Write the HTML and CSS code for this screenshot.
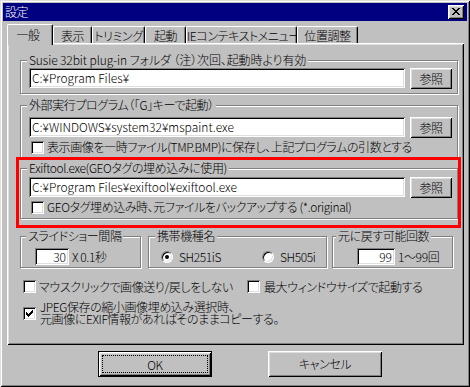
FILE: index.html
```html
<!DOCTYPE html>
<html lang="ja">
<head>
<meta charset="utf-8">
<title>設定</title>
<link rel="stylesheet" href="styles.css">
</head>
<body>
<div class="window">
  <div class="titlebar">
    <span class="title">設定</span>
    <span class="close"><svg width="8" height="7" viewBox="0 0 8 7" shape-rendering="crispEdges"><path d="M0 0h2v1H0zM6 0h2v1H6zM1 1h2v1H1zM5 1h2v1H5zM2 2h4v1H2zM3 3h2v1H3zM2 4h4v1H2zM1 5h2v1H1zM5 5h2v1H5zM0 6h2v1H0zM6 6h2v1H6z" fill="#000"/></svg></span>
  </div>
  <div class="dlg">
    <div class="tabs">
      <div class="tab active t1">一般</div>
      <div class="tab t2">表示</div>
      <div class="tab t3">トリミング</div>
      <div class="tab t4">起動</div>
      <div class="tab t5">IEコンテキストメニュー</div>
      <div class="tab t6">位置調整</div>
    </div>
    <div class="panel">
      <fieldset class="group g1">
        <legend>Susie 32bit plug-in フォルダ （注）次回、起動時より有効</legend>
        <div class="row">
          <div class="input wide">C:¥Program Files¥</div>
          <div class="btn small">参照</div>
        </div>
      </fieldset>
      <fieldset class="group g2">
        <legend>外部実行プログラム（「G」キーで起動）</legend>
        <div class="row">
          <div class="input wide">C:¥WINDOWS¥system32¥mspaint.exe</div>
          <div class="btn small">参照</div>
        </div>
        <div class="check-row inset">
          <span class="checkbox"></span>
          <span class="label">表示画像を一時ファイル(TMP.BMP)に保存し、上記プログラムの引数とする</span>
        </div>
      </fieldset>
      <fieldset class="group g3">
        <legend>Exiftool.exe(GEOタグの埋め込みに使用)</legend>
        <div class="row">
          <div class="input wide">C:¥Program Files¥exiftool¥exiftool.exe</div>
          <div class="btn small">参照</div>
        </div>
        <div class="check-row inset">
          <span class="checkbox"></span>
          <span class="label">GEOタグ埋め込み時、元ファイルをバックアップする (*.original)</span>
        </div>
      </fieldset>
      <div class="bottom-groups">
        <fieldset class="group g4">
          <legend>スライドショー間隔</legend>
          <div class="row mini">
            <div class="input num n30">30</div>
            <span class="unit">X 0.1秒</span>
          </div>
        </fieldset>
        <fieldset class="group g5">
          <legend>携帯機種名</legend>
          <div class="row mini radios">
            <span class="radio-item r1"><span class="radio on"></span><span>SH251iS</span></span>
            <span class="radio-item r2"><span class="radio"></span><span>SH505i</span></span>
          </div>
        </fieldset>
        <fieldset class="group g6">
          <legend>元に戻す可能回数</legend>
          <div class="row mini">
            <div class="input num n99">99</div>
            <span class="unit">1～99回</span>
          </div>
        </fieldset>
      </div>
      <div class="check-row opts">
        <span class="opt first"><span class="checkbox"></span><span class="label">マウスクリックで画像送り/戻しをしない</span></span>
        <span class="opt"><span class="checkbox"></span><span class="label">最大ウィンドウサイズで起動する</span></span>
      </div>
      <div class="check-row two-line">
        <span class="checkbox checked"><svg width="7" height="7" viewBox="0 0 7 7" shape-rendering="crispEdges"><path d="M6 0h1v1H6zM5 1h2v1H5zM0 2h1v1H0zM4 2h3v1H4zM0 3h2v1H0zM3 3h3v1H3zM0 4h5v1H0zM1 5h3v1H1zM2 6h1v1H2z" fill="#000"/></svg></span>
        <span class="label">JPEG保存の縮小画像埋め込み選択時、<br>元画像にEXIF情報があればそのままコピーする。</span>
      </div>
      <div class="annotation"></div>
    </div>
    <div class="buttons">
      <div class="btn big default"><span class="focus">OK</span></div>
      <div class="btn big cancel">キャンセル</div>
    </div>
  </div>
</div>
</body>
</html>
```

FILE: styles.css
```css
* { box-sizing: border-box; }
html, body { margin: 0; padding: 0; background: #c0c0c0; }
body {
  font-family: "Noto Sans CJK JP", "Noto Sans", sans-serif;
  font-size: 12px;
  font-weight: 300;
  line-height: 14px;
  letter-spacing: -0.4px;
  font-feature-settings: "palt" 1;
  color: #000;
}
.window {
  width: 470px;
  height: 387px;
  padding: 3px;
  background: #c0c0c0;
  box-shadow: inset 1px 1px #dfdfdf, inset -1px -1px #000, inset 2px 2px #fff, inset -2px -2px #808080;
}
.titlebar {
  height: 18px;
  background: #000080;
  color: #fff;
  display: flex;
  align-items: center;
  justify-content: space-between;
  padding: 0 3px 0 2px;
}
.title { line-height: 18px; }
.close {
  width: 16px;
  height: 14px;
  background: #c0c0c0;
  display: flex;
  align-items: center;
  justify-content: center;
  box-shadow: inset 1px 1px #fff, inset -1px -1px #000, inset 2px 2px #dfdfdf, inset -2px -2px #808080;
}
.close svg { display: block; margin-top: -1px; }
.dlg { padding: 3px 3px 0 4px; }

/* tabs */
.tabs { display: flex; align-items: flex-end; height: 19px; }
.tab {
  height: 17px;
  text-align: center;
  line-height: 17px;
  background: #c0c0c0;
  border-top: 1px solid #fff;
  border-left: 1px solid #fff;
  border-right: 1px solid #000;
  border-radius: 2px 2px 0 0;
  box-shadow: inset -1px 0 #808080;
  white-space: nowrap;
}
.tab.active {
  height: 21px;
  margin-bottom: -2px;
  position: relative;
  z-index: 1;
  line-height: 19px;
  padding-right: 4px;
}
.t1 { width: 46px; }
.t2 { width: 39px; }
.t3 { width: 53px; }
.t4 { width: 41px; }
.t5 { width: 111px; }
.t6 { width: 61px; }

.panel {
  position: relative;
  height: 302px;
  display: flow-root;
  padding: 0 6px 0 13px;
  box-shadow: inset 1px 1px #fff, inset -1px -1px #000, inset 2px 2px #dfdfdf, inset -2px -2px #808080;
}

/* group boxes */
.group {
  margin: 0;
  min-width: 0;
  border: 1px solid #808080;
  box-shadow: inset 1px 1px #fff, 1px 1px #fff;
}
.group legend {
  padding: 0 2px;
  margin-left: -2px;
  line-height: 14px;
  height: 14px;
  background: #c0c0c0;
  white-space: nowrap;
}
.g1 legend { letter-spacing: -0.1px; }
.g1 { margin-top: 10px; padding: 1px 5px 5px 8px; }
.g2 { margin-top: 4px; padding: 5px 5px 2px 8px; }
.g3 { margin-top: 3px; padding: 2px 5px 3px 8px; }

.row { display: flex; align-items: center; height: 20px; gap: 5px; }
.input {
  height: 20px;
  background: #fff;
  padding: 0 3px;
  line-height: 20px;
  letter-spacing: 0;
  white-space: nowrap;
  overflow: hidden;
  box-shadow: inset 1px 1px #808080, inset -1px -1px #fff, inset 2px 2px #000, inset -2px -2px #dfdfdf;
}
.input.wide { flex: 1; }

.btn {
  background: #c0c0c0;
  text-align: center;
  box-shadow: inset 1px 1px #fff, inset -1px -1px #000, inset 2px 2px #dfdfdf, inset -2px -2px #808080;
}
.btn.small { width: 42px; height: 21px; line-height: 21px; }

.check-row { display: flex; align-items: center; }
.check-row.inset { height: 16px; margin-top: 2px; padding-left: 2px; gap: 3px; }
.checkbox {
  width: 13px;
  height: 13px;
  flex: none;
  background: #fff;
  display: flex;
  align-items: center;
  justify-content: center;
  box-shadow: inset 1px 1px #808080, inset -1px -1px #fff, inset 2px 2px #000, inset -2px -2px #dfdfdf;
}
.label { white-space: nowrap; }

/* bottom groups */
.bottom-groups { display: flex; margin-top: 10px; }
.g4 { width: 121px; padding: 5px 4px 2px 7px; }
.g5 { width: 179px; margin-left: 7px; padding: 5px 4px 2px 8px; }
.g6 { width: 121px; margin-left: 5px; padding: 5px 4px 2px 5px; }
.g4 .row { padding-left: 7px; }
.g5 .row { padding-left: 4px; }
.g6 .row { padding-left: 19px; }
.row.mini { height: 17px; gap: 3px; }
.input.num { height: 17px; line-height: 17px; text-align: right; padding: 0 3px 0 0; }
.n30 { width: 34px; }
.n99 { width: 38px; }
.radios { gap: 0; }
.radio-item { display: flex; align-items: center; gap: 6px; }
.r1 { width: 98px; }
.radio {
  width: 12px;
  height: 12px;
  border-radius: 50%;
  background: #fff;
  border: 1px solid;
  border-color: #808080 #fff #fff #808080;
  box-shadow: inset 1px 1px #000, inset -1px -1px #dfdfdf;
  display: flex;
  align-items: center;
  justify-content: center;
}
.radio.on::after {
  content: "";
  width: 4px;
  height: 4px;
  border-radius: 50%;
  background: #000;
}

.opts { height: 17px; margin-top: 10px; padding-left: 3px; }
.opt { display: flex; align-items: center; gap: 3px; }
.opt.first { width: 224px; }
.opt + .opt { gap: 4px; }
.two-line { margin-top: 6px; padding-left: 3px; gap: 4px; align-items: center; }
.two-line .label { line-height: 12px; }

.annotation {
  position: absolute;
  left: 9px;
  top: 114px;
  width: 445px;
  height: 71px;
  border: 3px solid #ff0000;
}

/* dialog buttons */
.buttons { display: flex; margin-top: 6px; padding-left: 91px; gap: 56px; }
.btn.big { width: 114px; height: 26px; line-height: 26px; }
.btn.default {
  padding: 4px;
  box-shadow: inset 0 0 0 1px #000, inset 2px 2px #fff, inset -2px -2px #000, inset 3px 3px #dfdfdf, inset -3px -3px #808080;
}
.focus {
  display: block;
  height: 18px;
  line-height: 17px;
  border: 1px dotted #000;
}
```
